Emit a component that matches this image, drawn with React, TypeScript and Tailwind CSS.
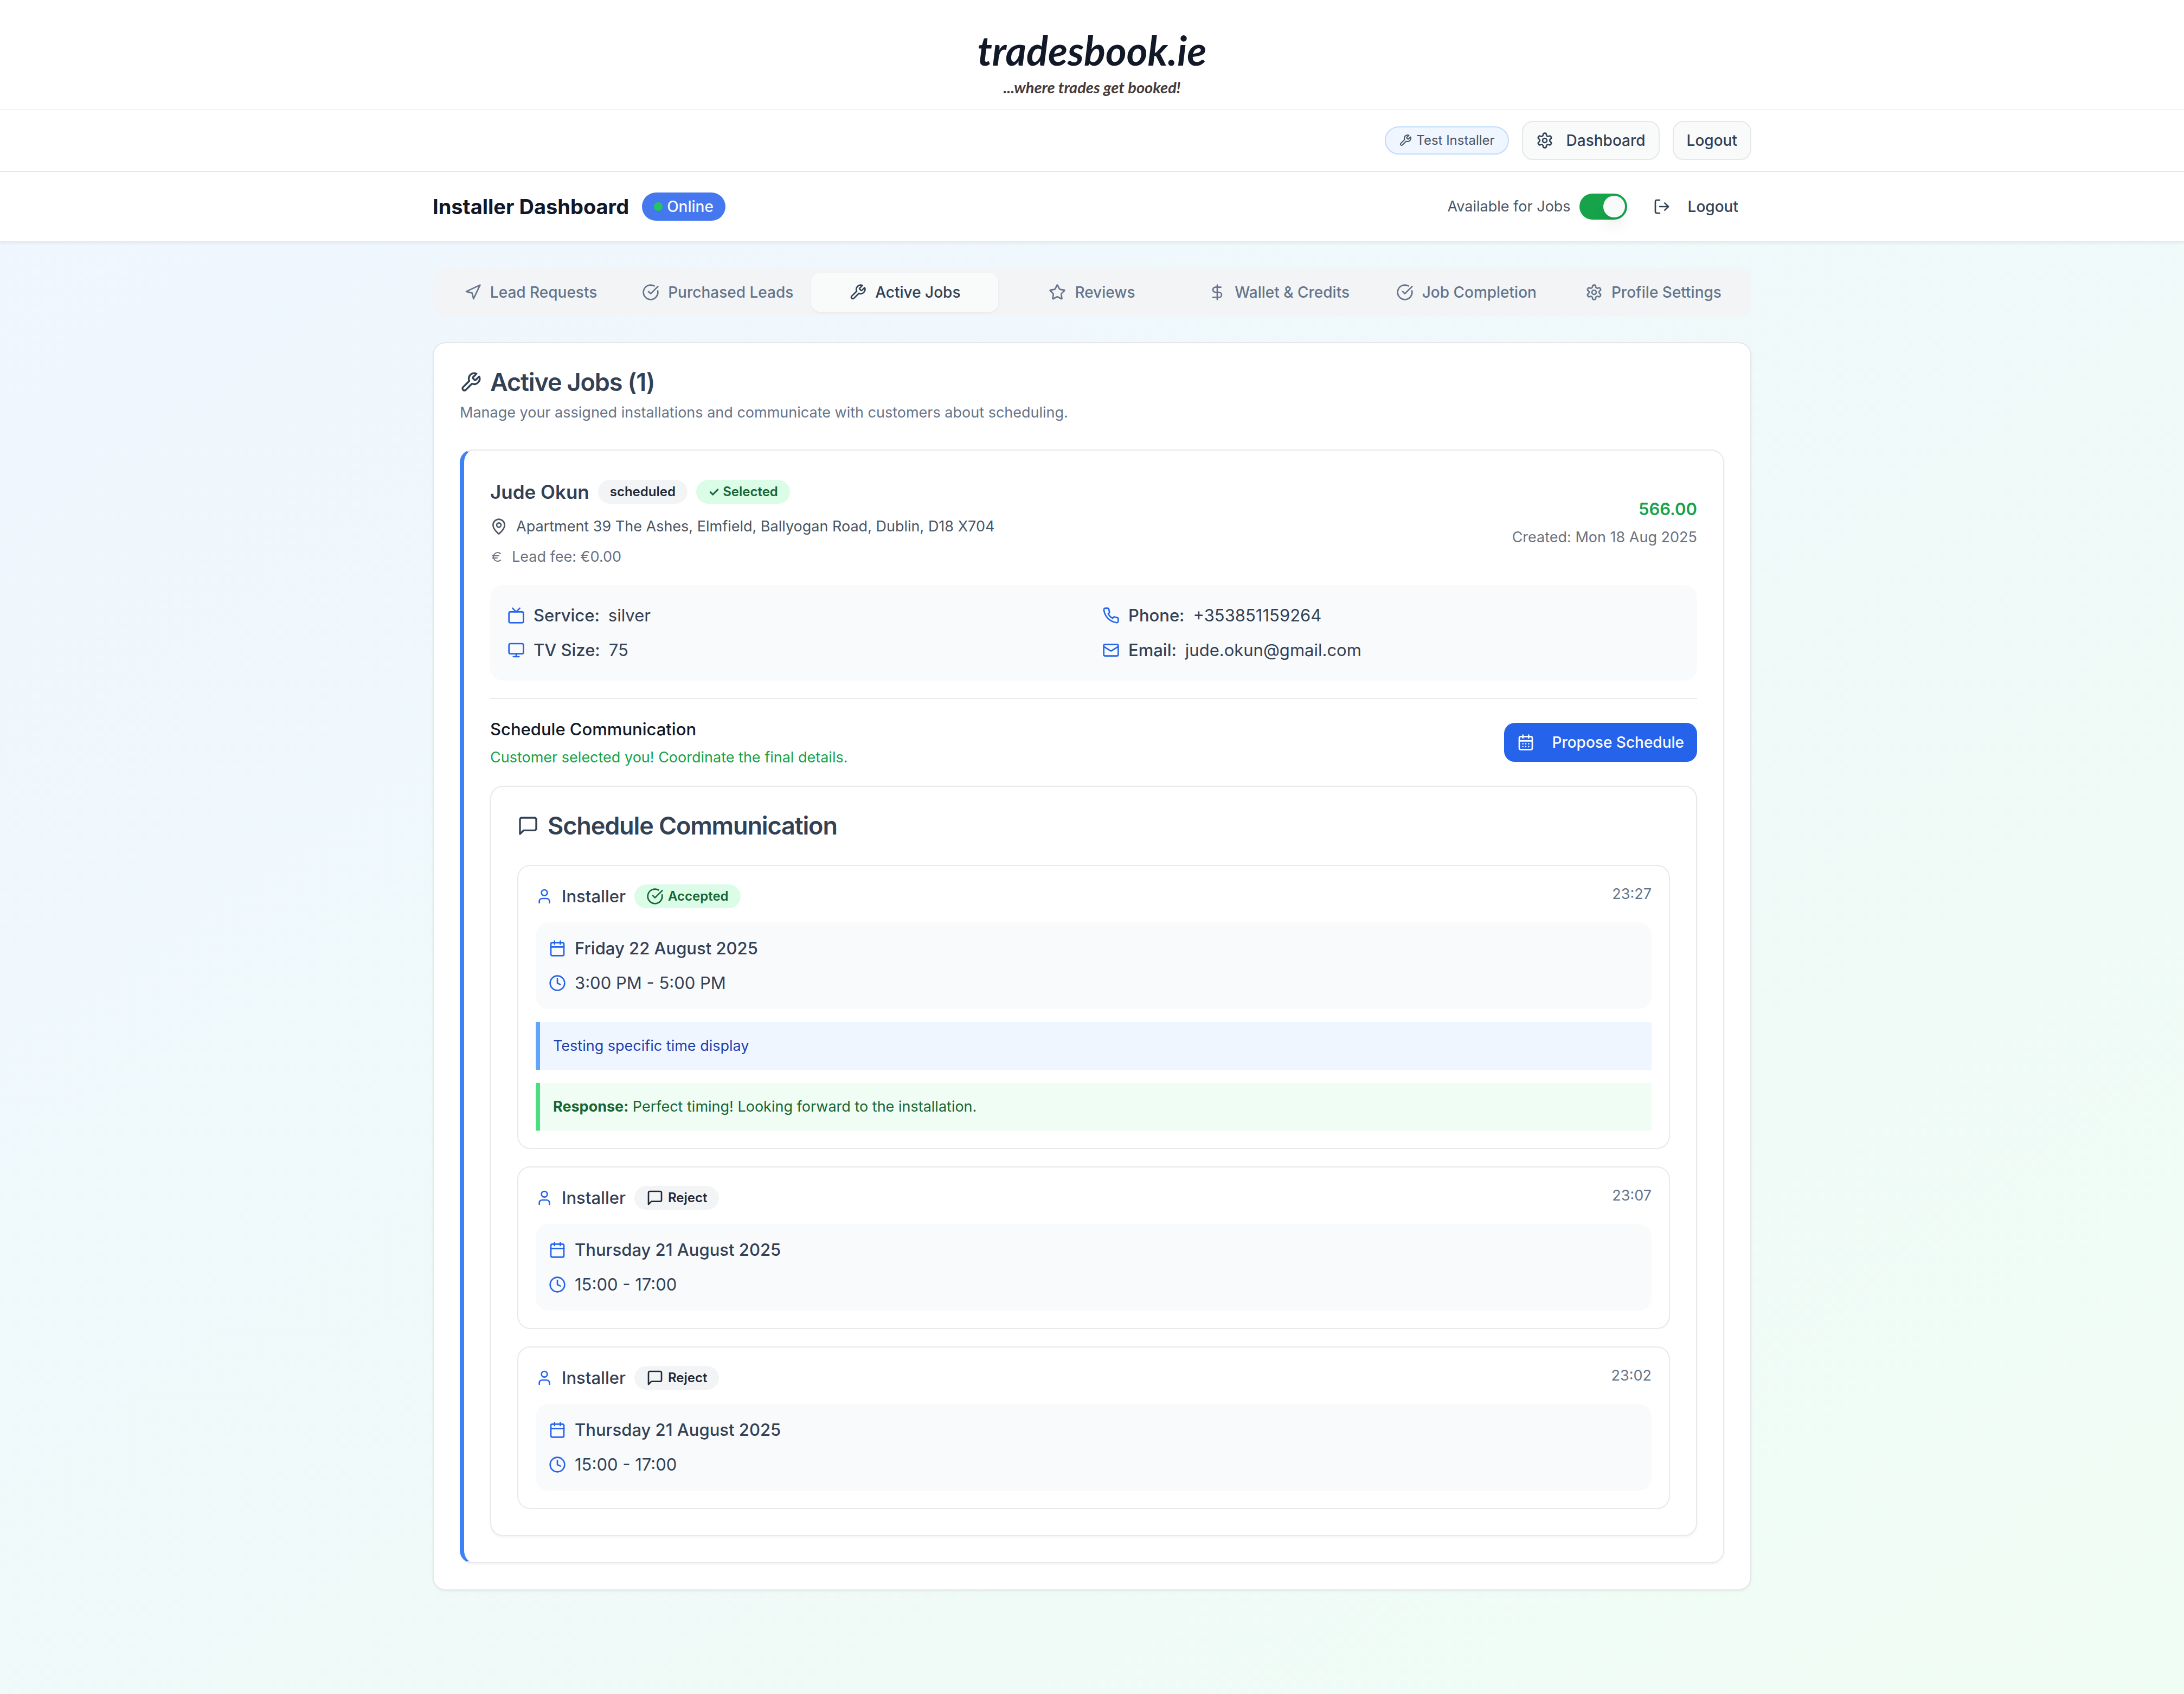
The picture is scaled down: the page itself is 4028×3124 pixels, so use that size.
import { useState } from "react";
import type { ReactNode } from "react";

type IconProps = { className?: string; children?: ReactNode };

function Icon({ className = "size-8", children }: IconProps) {
  return (
    <svg
      viewBox="0 0 24 24"
      fill="none"
      stroke="currentColor"
      strokeWidth="2"
      strokeLinecap="round"
      strokeLinejoin="round"
      aria-hidden="true"
      className={`shrink-0 ${className}`}
    >
      {children}
    </svg>
  );
}

const WrenchIcon = ({ className }: IconProps) => (
  <Icon className={className}>
    <path d="M14.7 6.3a1 1 0 0 0 0 1.4l1.6 1.6a1 1 0 0 0 1.4 0l3.77-3.77a6 6 0 0 1-7.94 7.94l-6.91 6.91a2.12 2.12 0 0 1-3-3l6.91-6.91a6 6 0 0 1 7.94-7.94l-3.76 3.76z" />
  </Icon>
);

const SettingsIcon = ({ className }: IconProps) => (
  <Icon className={className}>
    <path d="M12.22 2h-.44a2 2 0 0 0-2 2v.18a2 2 0 0 1-1 1.73l-.43.25a2 2 0 0 1-2 0l-.15-.08a2 2 0 0 0-2.73.73l-.22.38a2 2 0 0 0 .73 2.73l.15.1a2 2 0 0 1 1 1.72v.51a2 2 0 0 1-1 1.74l-.15.09a2 2 0 0 0-.73 2.73l.22.38a2 2 0 0 0 2.73.73l.15-.08a2 2 0 0 1 2 0l.43.25a2 2 0 0 1 1 1.73V20a2 2 0 0 0 2 2h.44a2 2 0 0 0 2-2v-.18a2 2 0 0 1 1-1.73l.43-.25a2 2 0 0 1 2 0l.15.08a2 2 0 0 0 2.73-.73l.22-.39a2 2 0 0 0-.73-2.73l-.15-.08a2 2 0 0 1-1-1.74v-.5a2 2 0 0 1 1-1.74l.15-.09a2 2 0 0 0 .73-2.73l-.22-.38a2 2 0 0 0-2.73-.73l-.15.08a2 2 0 0 1-2 0l-.43-.25a2 2 0 0 1-1-1.73V4a2 2 0 0 0-2-2z" />
    <circle cx="12" cy="12" r="3" />
  </Icon>
);

const LogOutIcon = ({ className }: IconProps) => (
  <Icon className={className}>
    <path d="M9 21H5a2 2 0 0 1-2-2V5a2 2 0 0 1 2-2h4" />
    <polyline points="16 17 21 12 16 7" />
    <line x1="21" x2="9" y1="12" y2="12" />
  </Icon>
);

const NavigationIcon = ({ className }: IconProps) => (
  <Icon className={className}>
    <polygon points="3 11 22 2 13 21 11 13 3 11" />
  </Icon>
);

const CheckCircleIcon = ({ className }: IconProps) => (
  <Icon className={className}>
    <path d="M21.801 10A10 10 0 1 1 17 3.335" />
    <path d="m9 11 3 3L22 4" />
  </Icon>
);

const StarIcon = ({ className }: IconProps) => (
  <Icon className={className}>
    <path d="M11.525 2.295a.53.53 0 0 1 .95 0l2.31 4.679a2.123 2.123 0 0 0 1.595 1.16l5.166.756a.53.53 0 0 1 .294.904l-3.736 3.638a2.123 2.123 0 0 0-.611 1.878l.882 5.14a.53.53 0 0 1-.771.56l-4.618-2.428a2.122 2.122 0 0 0-1.973 0L6.396 21.01a.53.53 0 0 1-.77-.56l.881-5.139a2.122 2.122 0 0 0-.611-1.879L2.16 9.795a.53.53 0 0 1 .294-.906l5.165-.755a2.122 2.122 0 0 0 1.597-1.16z" />
  </Icon>
);

const DollarIcon = ({ className }: IconProps) => (
  <Icon className={className}>
    <line x1="12" x2="12" y1="2" y2="22" />
    <path d="M17 5H9.5a3.5 3.5 0 0 0 0 7h5a3.5 3.5 0 0 1 0 7H6" />
  </Icon>
);

const EuroIcon = ({ className }: IconProps) => (
  <Icon className={className}>
    <path d="M4 10h12" />
    <path d="M4 14h9" />
    <path d="M19 6a7.7 7.7 0 0 0-5.2-2A7.9 7.9 0 0 0 6 12c0 4.4 3.5 8 7.8 8 2 0 3.8-.8 5.2-2" />
  </Icon>
);

const MapPinIcon = ({ className }: IconProps) => (
  <Icon className={className}>
    <path d="M20 10c0 4.993-5.539 10.193-7.399 11.799a1 1 0 0 1-1.202 0C9.539 20.193 4 14.993 4 10a8 8 0 0 1 16 0" />
    <circle cx="12" cy="10" r="3" />
  </Icon>
);

const TvIcon = ({ className }: IconProps) => (
  <Icon className={className}>
    <rect width="20" height="15" x="2" y="7" rx="2" ry="2" />
    <polyline points="17 2 12 7 7 2" />
  </Icon>
);

const MonitorIcon = ({ className }: IconProps) => (
  <Icon className={className}>
    <rect width="20" height="14" x="2" y="3" rx="2" />
    <line x1="8" x2="16" y1="21" y2="21" />
    <line x1="12" x2="12" y1="17" y2="21" />
  </Icon>
);

const PhoneIcon = ({ className }: IconProps) => (
  <Icon className={className}>
    <path d="M22 16.92v3a2 2 0 0 1-2.18 2 19.79 19.79 0 0 1-8.63-3.07 19.5 19.5 0 0 1-6-6 19.79 19.79 0 0 1-3.07-8.67A2 2 0 0 1 4.11 2h3a2 2 0 0 1 2 1.72 12.84 12.84 0 0 0 .7 2.81 2 2 0 0 1-.45 2.11L8.09 9.91a16 16 0 0 0 6 6l1.27-1.27a2 2 0 0 1 2.11-.45 12.84 12.84 0 0 0 2.81.7A2 2 0 0 1 22 16.92z" />
  </Icon>
);

const MailIcon = ({ className }: IconProps) => (
  <Icon className={className}>
    <rect width="20" height="16" x="2" y="4" rx="2" />
    <path d="m22 7-8.97 5.7a1.94 1.94 0 0 1-2.06 0L2 7" />
  </Icon>
);

const CalendarIcon = ({ className }: IconProps) => (
  <Icon className={className}>
    <path d="M8 2v4M16 2v4" />
    <rect width="18" height="18" x="3" y="4" rx="2" />
    <path d="M3 10h18" />
  </Icon>
);

const CalendarDaysIcon = ({ className }: IconProps) => (
  <Icon className={className}>
    <path d="M8 2v4M16 2v4" />
    <rect width="18" height="18" x="3" y="4" rx="2" />
    <path d="M3 10h18M8 14h.01M12 14h.01M16 14h.01M8 18h.01M12 18h.01M16 18h.01" />
  </Icon>
);

const ClockIcon = ({ className }: IconProps) => (
  <Icon className={className}>
    <circle cx="12" cy="12" r="10" />
    <polyline points="12 6 12 12 16 14" />
  </Icon>
);

const MessageIcon = ({ className }: IconProps) => (
  <Icon className={className}>
    <path d="M21 15a2 2 0 0 1-2 2H7l-4 4V5a2 2 0 0 1 2-2h14a2 2 0 0 1 2 2z" />
  </Icon>
);

const UserIcon = ({ className }: IconProps) => (
  <Icon className={className}>
    <path d="M19 21v-2a4 4 0 0 0-4-4H9a4 4 0 0 0-4 4v2" />
    <circle cx="12" cy="7" r="4" />
  </Icon>
);

const tabs = [
  { label: "Lead Requests", icon: NavigationIcon },
  { label: "Purchased Leads", icon: CheckCircleIcon },
  { label: "Active Jobs", icon: WrenchIcon },
  { label: "Reviews", icon: StarIcon },
  { label: "Wallet & Credits", icon: DollarIcon },
  { label: "Job Completion", icon: CheckCircleIcon },
  { label: "Profile Settings", icon: SettingsIcon },
];

const details = [
  { label: "Service:", value: "silver", icon: TvIcon },
  { label: "Phone:", value: "+353851159264", icon: PhoneIcon },
  { label: "TV Size:", value: "75", icon: MonitorIcon },
  { label: "Email:", value: "jude.okun@gmail.com", icon: MailIcon },
];

type Proposal = {
  status: "Accepted" | "Reject";
  sent: string;
  date: string;
  slot: string;
  message?: string;
  response?: string;
};

const proposals: Proposal[] = [
  {
    status: "Accepted",
    sent: "23:27",
    date: "Friday 22 August 2025",
    slot: "3:00 PM - 5:00 PM",
    message: "Testing specific time display",
    response: "Perfect timing! Looking forward to the installation.",
  },
  { status: "Reject", sent: "23:07", date: "Thursday 21 August 2025", slot: "15:00 - 17:00" },
  { status: "Reject", sent: "23:02", date: "Thursday 21 August 2025", slot: "15:00 - 17:00" },
];

function Badge({ green, children }: { green?: boolean; children: ReactNode }) {
  return (
    <span
      className={`inline-flex items-center gap-2 rounded-full border-2 border-transparent px-5 py-1 text-[24px] leading-8 font-semibold ${
        green ? "bg-green-100 text-[#166534]" : "bg-[#f3f4f6] text-[#1f2937]"
      }`}
    >
      {children}
    </span>
  );
}

function ProposalCard({ proposal }: { proposal: Proposal }) {
  const accepted = proposal.status === "Accepted";
  return (
    <li className="flex flex-col gap-6 rounded-3xl border-2 border-[#e8e9ed] p-8">
      <div className="flex items-start justify-between">
        <div className="flex items-center gap-4">
          <UserIcon className="size-8 text-[#2563eb]" />
          <span className="text-[31px] leading-[48px] font-medium">Installer</span>
          <Badge green={accepted}>
            {accepted ? <CheckCircleIcon /> : <MessageIcon />}
            {proposal.status}
          </Badge>
        </div>
        <time className="text-[27px] leading-10 text-[#64748b]">{proposal.sent}</time>
      </div>
      <div className="flex flex-col gap-4 rounded-3xl bg-[#f9fafb] p-6 text-[31px] leading-[48px]">
        <div className="flex items-center gap-4">
          <CalendarIcon className="size-8 text-[#2563eb]" />
          <span className="font-medium">{proposal.date}</span>
        </div>
        <div className="flex items-center gap-4">
          <ClockIcon className="size-8 text-[#2563eb]" />
          <span>{proposal.slot}</span>
        </div>
      </div>
      {proposal.message && (
        <p className="border-l-8 border-[#60a5fa] bg-[#eff6ff] p-6 text-[27px] leading-10 text-[#1e40af]">
          {proposal.message}
        </p>
      )}
      {proposal.response && (
        <p className="border-l-8 border-[#4ade80] bg-[#f0fdf4] p-6 text-[27px] leading-10 text-[#166534]">
          <strong className="font-bold">Response:</strong> {proposal.response}
        </p>
      )}
    </li>
  );
}

export default function App() {
  const [activeTab, setActiveTab] = useState("Active Jobs");
  const [available, setAvailable] = useState(true);

  return (
    <div className="flex min-h-screen flex-col bg-white font-['Inter',sans-serif] text-[#334155]">
      <header>
        <div className="flex flex-col items-center border-b-2 border-[#f3f4f6] pt-[45px] pb-5 font-['Lato',sans-serif]">
          <a href="#home" className="flex flex-col items-center">
            <span className="text-[74px] leading-[96px] font-bold text-[#111827] italic">tradesbook.ie</span>
            <span className="text-[29px] leading-10 font-bold text-[#463a3a] italic">...where trades get booked!</span>
          </a>
        </div>
        <div className="border-b-2 border-[#e5e7eb] shadow-[0_2px_4px_rgba(0,0,0,0.05)]">
          <div className="mx-auto flex w-full max-w-[2560px] items-center justify-end gap-6 px-16 py-5">
            <span className="flex items-center gap-2 rounded-full border-2 border-[#bfdbfe] bg-[#eff6ff] px-6 py-2 text-[24px] leading-8 text-[#4b5563]">
              <WrenchIcon className="size-6" />
              Test Installer
            </span>
            <button
              type="button"
              className="flex h-[72px] items-center gap-6 rounded-[20px] border-2 border-[#e5e7eb] bg-[#f9fafa] px-6 text-[28px] leading-10 font-medium"
            >
              <SettingsIcon />
              Dashboard
            </button>
            <button
              type="button"
              className="flex h-[72px] items-center rounded-[20px] border-2 border-[#e5e7eb] bg-[#f9fafa] px-6 text-[28px] leading-10 font-medium"
            >
              Logout
            </button>
          </div>
        </div>
      </header>

      <div className="flex-1 bg-linear-to-br/srgb from-[#eff6ff] to-[#f0fdf4]">
        <div className="border-b-2 border-[#e5e7eb] bg-white shadow-[0_2px_4px_rgba(0,0,0,0.05)]">
          <div className="mx-auto flex h-32 w-full max-w-[2560px] items-center justify-between px-16">
            <div className="flex items-center gap-6">
              <h1 className="text-[38px] leading-[56px] font-bold text-[#111827]">Installer Dashboard</h1>
              <span className="flex items-center gap-2 rounded-full border-2 border-transparent bg-[#4577ee] px-5 py-1 text-[28px] leading-10 font-medium text-[#f8fafc]">
                <span className="size-4 rounded-full bg-[#22c55e]" />
                Online
              </span>
            </div>
            <div className="flex items-center gap-6">
              <div className="flex items-center gap-4">
                <label htmlFor="availability" className="text-[27px] leading-10 text-[#4b5563]">
                  Available for Jobs
                </label>
                <input
                  id="availability"
                  type="checkbox"
                  role="switch"
                  checked={available}
                  onChange={(event) => setAvailable(event.target.checked)}
                  className="flex h-12 w-[88px] appearance-none items-center rounded-full bg-[#e5e7eb] p-1 before:size-10 before:rounded-full before:bg-[#f9fafa] before:shadow-[0_20px_30px_-6px_rgba(0,0,0,0.1),0_8px_12px_-8px_rgba(0,0,0,0.1)] checked:justify-end checked:bg-[#16a34a]"
                />
              </div>
              <button
                type="button"
                className="flex h-[72px] items-center gap-8 rounded-[20px] px-6 text-[28px] leading-10 font-medium"
              >
                <LogOutIcon />
                Logout
              </button>
            </div>
          </div>
        </div>

        <main className="mx-auto flex w-full max-w-[2560px] flex-col gap-12 px-16 py-12">
          <div role="tablist" className="grid grid-cols-7 rounded-[20px] bg-[#f3f4f6] p-2">
            {tabs.map(({ label, icon: TabIcon }) => (
              <button
                key={label}
                type="button"
                role="tab"
                aria-selected={label === activeTab}
                onClick={() => setActiveTab(label)}
                className={`flex items-center justify-center gap-4 rounded-2xl px-6 py-4 text-[28px] leading-10 font-medium whitespace-nowrap ${
                  label === activeTab
                    ? "bg-[#f9fafa] text-[#334155] shadow-[0_2px_4px_rgba(0,0,0,0.05)]"
                    : "text-[#64748b]"
                }`}
              >
                <TabIcon className="size-8" />
                {label}
              </button>
            ))}
          </div>

          <section className="flex flex-col gap-12 rounded-3xl border-2 border-[#e5e7eb] bg-white p-12 shadow-[0_2px_4px_rgba(0,0,0,0.05)]">
            <div className="flex flex-col gap-3">
              <h2 className="flex items-center gap-4 text-[45px] leading-[48px] font-semibold tracking-tight">
                <WrenchIcon className="size-10" />
                Active Jobs (1)
              </h2>
              <p className="text-[27px] leading-10 text-[#64748b]">
                Manage your assigned installations and communicate with customers about scheduling.
              </p>
            </div>

            <article className="flex flex-col gap-8 rounded-3xl border-2 border-l-8 border-[#e8e9ed] border-l-[#3b82f6] p-12 shadow-[0_2px_4px_rgba(0,0,0,0.05)]">
              <div className="flex items-center justify-between">
                <div className="flex flex-col gap-4">
                  <div className="flex items-center gap-4">
                    <h3 className="text-[35px] leading-[56px] font-semibold">Jude Okun</h3>
                    <Badge>scheduled</Badge>
                    <Badge green>✓ Selected</Badge>
                  </div>
                  <p className="flex items-center gap-4 text-[27px] leading-10 text-[#4b5563]">
                    <MapPinIcon />
                    Apartment 39 The Ashes, Elmfield, Ballyogan Road, Dublin, D18 X704
                  </p>
                  <p className="flex items-center gap-4 text-[27px] leading-10 text-[#6b7280]">
                    <EuroIcon className="size-6" />
                    Lead fee: €0.00
                  </p>
                </div>
                <div className="flex flex-col gap-2 text-right">
                  <p className="text-[31px] leading-[48px] font-semibold text-[#16a34a]">566.00</p>
                  <p className="text-[27px] leading-10 text-[#6b7280]">Created: Mon 18 Aug 2025</p>
                </div>
              </div>

              <dl className="grid grid-cols-2 gap-x-8 gap-y-4 rounded-3xl bg-[#f9fafb] p-8 text-[31px] leading-[48px]">
                {details.map(({ label, value, icon: DetailIcon }) => (
                  <div key={label} className="flex items-center gap-4">
                    <DetailIcon className="size-8 text-[#2563eb]" />
                    <dt className="font-medium">{label}</dt>
                    <dd>{value}</dd>
                  </div>
                ))}
              </dl>

              <div className="flex items-center justify-between border-t-2 border-[#e8e9ed] pt-8">
                <div className="flex flex-col gap-2">
                  <h4 className="text-[31px] leading-[48px] font-medium text-[#111827]">Schedule Communication</h4>
                  <p className="text-[27px] leading-10 text-[#16a34a]">
                    Customer selected you! Coordinate the final details.
                  </p>
                </div>
                <button
                  type="button"
                  className="flex h-[72px] items-center gap-8 rounded-[20px] bg-[#2563eb] px-6 text-[28px] leading-10 font-medium text-[#f8fafc]"
                >
                  <CalendarDaysIcon />
                  Propose Schedule
                </button>
              </div>

              <section className="flex flex-col gap-12 rounded-3xl border-2 border-[#e8e9ed] p-12 shadow-[0_2px_4px_rgba(0,0,0,0.05)]">
                <h3 className="flex items-center gap-4 text-[45px] leading-[48px] font-semibold tracking-tight">
                  <MessageIcon className="size-10" />
                  Schedule Communication
                </h3>
                <ul className="flex flex-col gap-8">
                  {proposals.map((proposal) => (
                    <ProposalCard key={proposal.sent} proposal={proposal} />
                  ))}
                </ul>
              </section>
            </article>
          </section>
        </main>
      </div>
    </div>
  );
}
